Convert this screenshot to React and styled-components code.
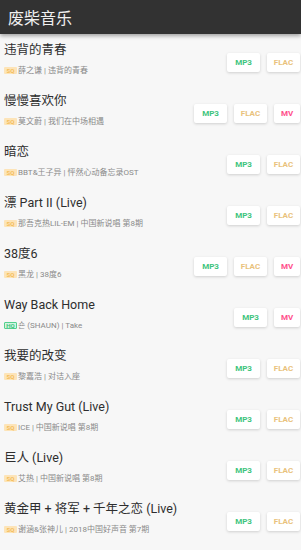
import styled, { createGlobalStyle } from 'styled-components';

const GlobalStyle = createGlobalStyle`
  html, body {
    margin: 0;
    padding: 0;
    background: #f7f7f7;
  }
  body {
    font-family: Roboto, "Noto Sans CJK SC", sans-serif;
    overflow: hidden;
  }
`;

const songs = [
  { title: '违背的青春', q: 'SQ', info: '薛之谦 | 违背的青春', mv: false },
  { title: '慢慢喜欢你', q: 'SQ', info: '莫文蔚 | 我们在中场相遇', mv: true },
  { title: '暗恋', q: 'SQ', info: 'BBT&王子异 | 怦然心动备忘录OST', mv: false },
  { title: '漂 Part II (Live)', q: 'SQ', info: '那吾克热LIL-EM | 中国新说唱 第8期', mv: false },
  { title: '38度6', q: 'SQ', info: '黑龙 | 38度6', mv: true },
  { title: 'Way Back Home', q: 'HQ', info: '숀 (SHAUN) | Take', mv: true, noFlac: true },
  { title: '我要的改变', q: 'SQ', info: '黎嘉浩 | 对诘入座', mv: false },
  { title: 'Trust My Gut (Live)', q: 'SQ', info: 'ICE | 中国新说唱 第8期', mv: false },
  { title: '巨人 (Live)', q: 'SQ', info: '艾热 | 中国新说唱 第8期', mv: false },
  { title: '黄金甲 + 将军 + 千年之恋 (Live)', q: 'SQ', info: '谢涵&张神儿 | 2018中国好声音 第7期', mv: false },
];

const Page = styled.div`
  display: flex;
  flex-direction: column;
  height: 550px;
`;

const TopBar = styled.header`
  height: 34px;
  background: #323232;
  color: #f0f0f0;
  display: flex;
  align-items: center;
  padding-left: 8px;
  font-size: 16px;
  box-shadow: 0 2px 4px rgba(0, 0, 0, 0.35);
  position: relative;
  z-index: 1;
`;

const List = styled.div`
  display: flex;
  flex-direction: column;
`;

const Row = styled.div`
  height: 51px;
  box-sizing: border-box;
  display: flex;
  align-items: flex-start;
  padding: 8px 1px 0 4px;
`;

const Info = styled.div`
  flex: 1;
  display: flex;
  flex-direction: column;
  min-width: 0;
  white-space: nowrap;
`;

const Title = styled.div`
  font-size: 12.5px;
  line-height: 15px;
  color: #2e2e2e;
`;

const Sub = styled.div`
  margin-top: 7.5px;
  font-size: 8px;
  line-height: 11px;
  color: #8a8a8a;
  display: flex;
  align-items: center;
`;

const Badge = styled.span`
  display: inline-flex;
  align-items: center;
  justify-content: center;
  width: 13px;
  height: 7px;
  margin-right: 1px;
  font-size: 6px;
  line-height: 7px;
  font-weight: 700;
  border-radius: 1px;
  box-sizing: border-box;
  background: ${p => (p.$hq ? '#d2f4e1' : '#fde4b8')};
  color: ${p => (p.$hq ? '#3cc47c' : '#f4bd5a')};
  border: ${p => (p.$hq ? '1px solid #54d08e' : 'none')};
`;

const Buttons = styled.div`
  display: flex;
  gap: 7px;
  margin-top: 11px;
  flex-shrink: 0;
`;

const Btn = styled.div`
  width: ${p => p.$w}px;
  height: 19px;
  background: #fff;
  border-radius: 2px;
  box-shadow: 0 1px 3px rgba(0, 0, 0, 0.16);
  display: flex;
  align-items: center;
  justify-content: center;
  font-size: 8px;
  font-weight: 700;
  color: ${p => p.$color};
`;

export default function App() {
  return (
    <Page>
      <GlobalStyle />
      <TopBar>废柴音乐</TopBar>
      <List>
        {songs.map(s => (
          <Row key={s.title}>
            <Info>
              <Title>{s.title}</Title>
              <Sub>
                <Badge $hq={s.q === 'HQ'}>{s.q}</Badge>
                {s.info}
              </Sub>
            </Info>
            <Buttons>
              <Btn $w={33} $color="#3ec47c">MP3</Btn>
              {!s.noFlac && <Btn $w={33} $color="#e9c27c">FLAC</Btn>}
              {s.mv && <Btn $w={26} $color="#ff4f8b">MV</Btn>}
            </Buttons>
          </Row>
        ))}
      </List>
    </Page>
  );
}
